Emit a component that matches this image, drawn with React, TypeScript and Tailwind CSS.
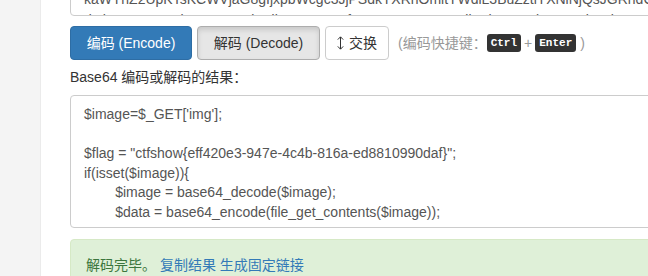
import React from "react";

const TAB = "\t";

const resultLines = [
  "$image=$_GET['img'];",
  "",
  '$flag = "ctfshow{eff420e3-947e-4c4b-816a-ed8810990daf}";',
  "if(isset($image)){",
  `${TAB}$image = base64_decode($image);`,
  `${TAB}$data = base64_encode(file_get_contents($image));`,
];

function SwapIcon() {
  return (
    <svg width="7" height="14" viewBox="0 0 7 14" className="mr-[5px]">
      <path d="M3.5 1 V13" stroke="#333" strokeWidth="1" fill="none" />
      <path d="M0.8 3.6 L3.5 0.8 L6.2 3.6" stroke="#333" strokeWidth="1" fill="none" />
      <path d="M0.8 10.4 L3.5 13.2 L6.2 10.4" stroke="#333" strokeWidth="1" fill="none" />
    </svg>
  );
}

function Kbd({ children }: { children: React.ReactNode }) {
  return (
    <kbd className="inline-flex h-[18px] items-center rounded-[3px] bg-[#333] px-[4px] font-['Liberation_Mono',monospace] text-[11px] font-bold text-white">
      {children}
    </kbd>
  );
}

export default function App() {
  return (
    <div className="flex h-[276px] w-[648px] overflow-hidden bg-white font-['Liberation_Sans','Noto_Sans_CJK_SC',sans-serif] text-[14px] text-[#333]">
      <div className="w-[41px] shrink-0 border-r border-[#ebebeb] bg-[#f4f4f4]" />
      <div className="min-w-0 flex-1 overflow-hidden pl-[29px]">
        {/* source textarea, scrolled */}
        <div className="mt-[-25px] h-[41px] w-[640px] overflow-hidden rounded-[4px] border border-[#ccc] pl-[13px] pt-[13px] leading-[21px] whitespace-nowrap text-[#555]">
          <div>kaWYnZ2UpKTsKCWVjaG8gIjxpbWcgc3JjPSdkYXRhOmltYWdlL3BuZztiYXNlNjQsJGRhdGEnPiI7</div>
          <div>dGhpcyBpcyBub3QgYWxsb3dlZCcpOwoJfQp9CmVsc2V7CgllY2hvICJmbGFnIGlzIGluIGZsYWcucGhwIjsKfQ==</div>
        </div>

        <div className="mt-[10px] flex h-[34px] items-center">
          <button className="h-[34px] w-[122px] rounded-[4px] border border-[#2e6da4] bg-[#337ab7] text-white">
            编码 (Encode)
          </button>
          <button className="ml-[5px] h-[34px] w-[123px] rounded-[4px] border border-[#adadad] bg-[#e6e6e6] text-[#333] shadow-[inset_0_3px_5px_rgba(0,0,0,0.125)]">
            解码 (Decode)
          </button>
          <button className="ml-[5px] flex h-[34px] w-[64px] items-center justify-center rounded-[4px] border border-[#ccc] bg-white text-[#333]">
            <SwapIcon />
            交换
          </button>
          <div className="ml-[9px] flex items-center whitespace-nowrap text-[#999]">
            <span>(编码快捷键：</span>
            <Kbd>Ctrl</Kbd>
            <span className="mx-[3px]">+</span>
            <Kbd>Enter</Kbd>
            <span>&nbsp;)</span>
          </div>
        </div>

        <div className="mt-[7px] leading-5">Base64 编码或解码的结果：</div>

        <div className="mt-[8px] h-[133px] w-[640px] overflow-hidden rounded-[4px] border border-[#ccc] pl-[13px] pt-[9px] leading-[19.5px] text-[#555] [tab-size:8]">
          {resultLines.map((line, i) => (
            <div key={i} className="h-[19.5px] whitespace-pre">
              {line}
            </div>
          ))}
        </div>

        <div className="mt-[11px] h-[60px] w-[640px] rounded-[4px] border border-[#d6e9c6] bg-[#dff0d8] p-[15px] leading-5 text-[#3c763d]">
          解码完毕。 <a className="text-[#337ab7]">复制结果</a>{" "}
          <a className="text-[#337ab7]">生成固定链接</a>
        </div>
      </div>
    </div>
  );
}
